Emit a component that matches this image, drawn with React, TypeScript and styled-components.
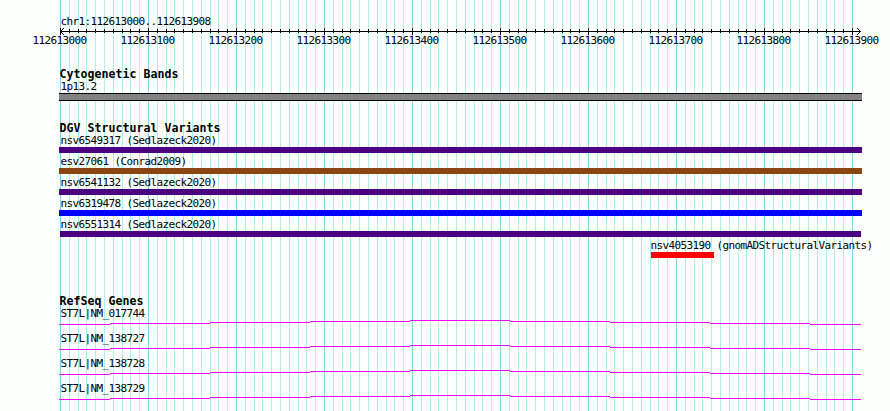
import React from "react";
import styled, { createGlobalStyle } from "styled-components";

const START = 112613000;
const ORIGIN = 60;
const STEP = 8.8;

const ticks = Array.from({ length: 91 }, (_, i) => ({
  x: Math.round(ORIGIN + i * STEP),
  major: i % 10 === 0,
}));

const rulerLabels = Array.from({ length: 10 }, (_, i) => START + i * 100);

interface Variant {
  name: string;
  source: string;
  color: string;
  start: number;
  end: number;
}

const variants: Variant[] = [
  { name: "nsv6549317", source: "Sedlazeck2020", color: "#4b0082", start: 59, end: 862 },
  { name: "esv27061", source: "Conrad2009", color: "#8b4513", start: 59, end: 862 },
  { name: "nsv6541132", source: "Sedlazeck2020", color: "#4b0082", start: 59, end: 862 },
  { name: "nsv6319478", source: "Sedlazeck2020", color: "#0000ff", start: 59, end: 862 },
  { name: "nsv6551314", source: "Sedlazeck2020", color: "#4b0082", start: 60, end: 861 },
  { name: "nsv4053190", source: "gnomADStructuralVariants", color: "#ff0000", start: 651, end: 714 },
];

const genes = ["NM_017744", "NM_138727", "NM_138728", "NM_138729"];

const GridLines: React.FC = () => (
  <Layer width="890" height="411" shapeRendering="crispEdges">
    {ticks.map(({ x, major }) => (
      <rect key={x} x={x} y={0} width={1} height={411} fill={major ? "#87ceeb" : "#afeeee"} />
    ))}
  </Layer>
);

const Ruler: React.FC = () => (
  <Axis width="890" height="9" shapeRendering="crispEdges">
    <rect x={60} y={4} width={801} height={1} />
    {ticks.map(({ x, major }) => (
      <rect key={x} x={x} y={major ? 1 : 2} width={1} height={major ? 7 : 4} />
    ))}
    {[1, 2, 3].map((d) => (
      <React.Fragment key={d}>
        <rect x={60 + d} y={4 - d} width={1} height={1} />
        <rect x={60 + d} y={4 + d} width={1} height={1} />
        <rect x={860 - d} y={4 - d} width={1} height={1} />
        <rect x={860 - d} y={4 + d} width={1} height={1} />
      </React.Fragment>
    ))}
  </Axis>
);

const Intron: React.FC = () => (
  <Axis width="890" height="5" fill="#ff00ff" shapeRendering="crispEdges">
    {[4, 3, 2, 1, 0, 1, 2, 3, 4].map((y, i) => {
      const from = i === 0 ? 59 : 10 + i * 100;
      const to = i === 8 ? 861 : 110 + i * 100;
      return <rect key={i} x={from} y={y} width={to - from} height={1} />;
    })}
  </Axis>
);

const App: React.FC = () => (
  <>
    <GlobalStyle />
    <Browser>
      <GridLines />
      <Tracks>
        <Region>chr1:112613000..112613908</Region>
        <Ruler />
        <Scale>
          {rulerLabels.map((label) => (
            <ScaleLabel key={label}>{label}</ScaleLabel>
          ))}
        </Scale>
        <Section $height={54}>
          <Heading>Cytogenetic Bands</Heading>
          <Label>1p13.2</Label>
          <Band />
        </Section>
        <Section $height={173}>
          <Heading>DGV Structural Variants</Heading>
          {variants.map(({ name, source, color, start, end }) => (
            <VariantRow key={name}>
              <Label $left={start < 100 ? 60.5 : start - 0.5}>
                {name} ({source})
              </Label>
              <VariantBar $color={color} $start={start} $width={end - start} />
            </VariantRow>
          ))}
        </Section>
        <Section $height={116}>
          <Heading>RefSeq Genes</Heading>
          {genes.map((gene) => (
            <GeneRow key={gene}>
              <Label>ST7L|{gene}</Label>
              <Intron />
            </GeneRow>
          ))}
        </Section>
      </Tracks>
    </Browser>
  </>
);

export default App;

const GlobalStyle = createGlobalStyle`
  body {
    margin: 0;
    background: #fcfffc;
  }
`;

const Browser = styled.div`
  display: grid;
  width: 890px;
  height: 411px;
  overflow: hidden;
  color: #000;
  font-family: "DejaVu Sans Mono", monospace;
  font-size: 11px;
  line-height: 13px;
  letter-spacing: -0.62px;
  white-space: pre;
`;

const Layer = styled.svg`
  grid-area: 1 / 1;
  display: block;
`;

const Tracks = styled.div`
  grid-area: 1 / 1;
  display: flex;
  flex-direction: column;
  width: 890px;
  height: 411px;
`;

const Axis = styled.svg`
  display: block;
  flex: none;
`;

const Region = styled.div`
  height: 12px;
  margin-top: 15px;
  padding-left: 60.5px;
`;

const Scale = styled.div`
  display: flex;
  height: 33px;
  padding-left: 15.5px;
  margin-top: -2px;
`;

const ScaleLabel = styled.div`
  width: 88px;
  flex: none;
  text-align: center;
`;

const Section = styled.section<{ $height: number }>`
  height: ${({ $height }) => $height}px;
  flex: none;
`;

const Heading = styled.h2`
  height: 13px;
  margin: 0;
  padding-left: 59.5px;
  font-size: 11.6px;
  font-weight: bold;
  line-height: 15px;
  letter-spacing: 0.02px;
`;

const Label = styled.div<{ $left?: number }>`
  height: 13px;
  padding-left: ${({ $left = 60.5 }) => $left}px;
`;

const Band = styled.div`
  box-sizing: border-box;
  width: 803px;
  height: 8px;
  margin-left: 59px;
  border: solid #000;
  border-width: 1px 0;
  background: #848284;
`;

const VariantRow = styled.div`
  height: 21px;
`;

const VariantBar = styled.div<{ $color: string; $start: number; $width: number }>`
  width: ${({ $width }) => $width}px;
  height: 6px;
  margin-left: ${({ $start }) => $start}px;
  background: ${({ $color }) => $color};
`;

const GeneRow = styled.div`
  height: 25px;
`;
